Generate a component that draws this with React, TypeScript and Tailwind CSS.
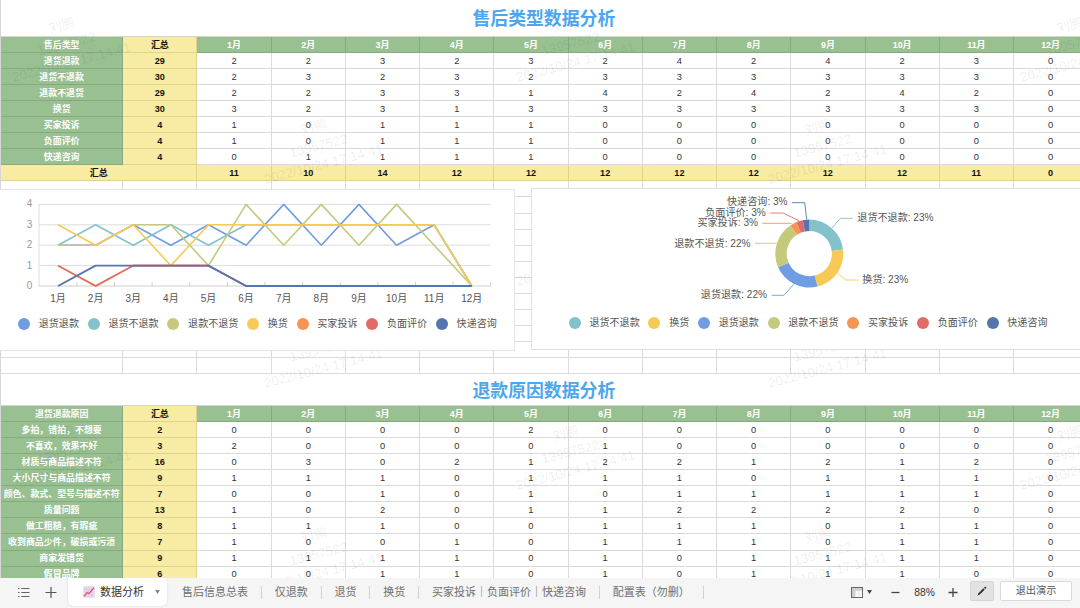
import React from "react";

const MONTHS = ["1月", "2月", "3月", "4月", "5月", "6月", "7月", "8月", "9月", "10月", "11月", "12月"];

const COLORS: Record<string, string> = {
  退货退款: "#709ce4",
  退货不退款: "#83c2ca",
  退款不退货: "#c6c87c",
  换货: "#f7c956",
  买家投诉: "#f69456",
  负面评价: "#e26c65",
  快递咨询: "#5475af",
};

type Row = { name: string; total: number; values: number[] };

const TYPES: Row[] = [
  { name: "退货退款", total: 29, values: [2, 2, 3, 2, 3, 2, 4, 2, 4, 2, 3, 0] },
  { name: "退货不退款", total: 30, values: [2, 3, 2, 3, 2, 3, 3, 3, 3, 3, 3, 0] },
  { name: "退款不退货", total: 29, values: [2, 2, 3, 3, 1, 4, 2, 4, 2, 4, 2, 0] },
  { name: "换货", total: 30, values: [3, 2, 3, 1, 3, 3, 3, 3, 3, 3, 3, 0] },
  { name: "买家投诉", total: 4, values: [1, 0, 1, 1, 1, 0, 0, 0, 0, 0, 0, 0] },
  { name: "负面评价", total: 4, values: [1, 0, 1, 1, 1, 0, 0, 0, 0, 0, 0, 0] },
  { name: "快递咨询", total: 4, values: [0, 1, 1, 1, 1, 0, 0, 0, 0, 0, 0, 0] },
];

const SUMS = [11, 10, 14, 12, 12, 12, 12, 12, 12, 12, 11, 0];

const REASONS: Row[] = [
  { name: "多拍，错拍，不想要", total: 2, values: [0, 0, 0, 0, 2, 0, 0, 0, 0, 0, 0, 0] },
  { name: "不喜欢，效果不好", total: 3, values: [2, 0, 0, 0, 0, 1, 0, 0, 0, 0, 0, 0] },
  { name: "材质与商品描述不符", total: 16, values: [0, 3, 0, 2, 1, 2, 2, 1, 2, 1, 2, 0] },
  { name: "大小尺寸与商品描述不符", total: 9, values: [1, 1, 1, 0, 1, 1, 1, 0, 1, 1, 1, 0] },
  { name: "颜色、款式、型号与描述不符", total: 7, values: [0, 0, 1, 0, 1, 0, 1, 1, 1, 1, 1, 0] },
  { name: "质量问题", total: 13, values: [1, 0, 2, 0, 1, 1, 2, 2, 2, 2, 0, 0] },
  { name: "做工粗糙，有瑕疵", total: 8, values: [1, 1, 1, 0, 0, 1, 1, 1, 0, 1, 1, 0] },
  { name: "收到商品少件，破损或污渍", total: 7, values: [1, 0, 0, 1, 0, 1, 1, 1, 0, 1, 1, 0] },
  { name: "商家发错货", total: 9, values: [1, 1, 1, 1, 0, 1, 0, 1, 1, 1, 1, 0] },
  { name: "假冒品牌", total: 6, values: [0, 0, 1, 1, 0, 1, 0, 1, 1, 1, 0, 0] },
];

const ROW = "grid h-[16.05px] shrink-0 grid-cols-[122.3px_74.1px_repeat(12,74.24px)]";
const CELL = "flex items-center justify-center whitespace-nowrap border-r border-b pt-[1.5px]";
const GREEN = "border-[#86aa80] bg-[#98c091] font-bold text-white";
const YELLOW = "border-[#e0d28f] bg-[#f8eba4] font-bold text-[#141414]";
const PLAIN = "border-[#dadada] bg-white text-[9.3px] text-[#333]";

function HeaderRow({ label }: { label: string }) {
  return (
    <div className={ROW}>
      <div className={`${CELL} ${GREEN}`}>{label}</div>
      <div className={`${CELL} ${YELLOW}`}>汇总</div>
      {MONTHS.map((m) => (
        <div key={m} className={`${CELL} ${GREEN}`}>{m}</div>
      ))}
    </div>
  );
}

function DataRow({ row }: { row: Row }) {
  return (
    <div className={ROW}>
      <div className={`${CELL} ${GREEN}`}>{row.name}</div>
      <div className={`${CELL} ${YELLOW} text-[9.1px]`}>{row.total}</div>
      {row.values.map((v, i) => (
        <div key={i} className={`${CELL} ${PLAIN}`}>{v}</div>
      ))}
    </div>
  );
}

function BlankRow() {
  return (
    <div className={ROW}>
      {Array.from({ length: 14 }, (_, i) => (
        <div key={i} className={`${CELL} ${PLAIN}`} />
      ))}
    </div>
  );
}

function Legend({ names }: { names: string[] }) {
  return (
    <div className="flex gap-[8.7px]">
      {names.map((n) => (
        <div key={n} className="flex items-center gap-[8.75px] whitespace-nowrap text-[10.05px] leading-3 text-[#555]">
          <span className="size-3 rounded-full" style={{ backgroundColor: COLORS[n] }} />
          <span>{n}</span>
        </div>
      ))}
    </div>
  );
}

function LineChart() {
  const x = (i: number) => 58 + i * 37.62;
  const y = (v: number) => 286 - v * 20.4;
  return (
    <svg className="absolute inset-0" width="514" height="160" viewBox="0 190 514 160">
      {[0, 1, 2, 3, 4].map((v) => (
        <g key={v}>
          <line x1="39" x2="490.5" y1={y(v)} y2={y(v)} stroke={v ? "#dcdcdc" : "#cfcfcf"} />
          <text x="32.3" y={y(v) + 3} textAnchor="end" fontSize="10" fill="#999">{v}</text>
        </g>
      ))}
      <line x1="39" x2="39" y1="204" y2="286" stroke="#dedede" />
      {MONTHS.map((m, i) => (
        <g key={m}>
          <line x1={x(i) + 18.9} x2={x(i) + 18.9} y1="282" y2="286" stroke="#cfcfcf" />
          <text x={x(i)} y="302" textAnchor="middle" fontSize="10" fill="#555">{m}</text>
        </g>
      ))}
      {TYPES.map((t, i) => (
        <polyline
          key={t.name}
          points={t.values.map((v, k) => `${x(k)},${y(v)}`).join(" ")}
          fill="none"
          stroke={COLORS[t.name]}
          strokeWidth={i === 6 ? 1.8 : 1.6}
          strokeLinejoin="bevel"
        />
      ))}
    </svg>
  );
}

const SLICES = [
  { name: "退货不退款", value: 30, pct: 23, line: "832,228 840.3,218.3 852.7,218.3", tx: 857.3, ty: 218, end: false },
  { name: "换货", value: 30, pct: 23, line: "837.3,273 845.7,280 858.3,280", tx: 862.3, ty: 280, end: false },
  { name: "退货退款", value: 29, pct: 22, line: "793.7,284.3 784,295.3 771.7,295.3", tx: 767, ty: 295.2, end: true },
  { name: "退款不退货", value: 29, pct: 22, line: "776.7,243.3 755,243.3", tx: 750.5, ty: 243.3, end: true },
  { name: "买家投诉", value: 4, pct: 3, line: "791.7,223.3 762.3,223.3", tx: 758, ty: 222.6, end: true },
  { name: "负面评价", value: 4, pct: 3, line: "799,220.7 783,213 770.3,213", tx: 765.8, ty: 212.5, end: true },
  { name: "快递咨询", value: 4, pct: 3, line: "806.7,219.3 804.7,202.7 792,202.7", tx: 787.6, ty: 202, end: true },
];

function Donut() {
  const cx = 809.3;
  const cy = 253.6;
  const pt = (r: number, f: number) => {
    const a = f * 2 * Math.PI - Math.PI / 2;
    return `${cx + r * Math.cos(a)},${cy + r * Math.sin(a)}`;
  };
  let acc = 0;
  return (
    <svg className="absolute inset-0" width="560" height="160" viewBox="532 189 560 160">
      {SLICES.map((s) => {
        const a = acc / 130;
        acc += s.value;
        const b = acc / 130;
        return (
          <g key={s.name}>
            <path
              d={`M${pt(34, a)} A34,34 0 0 1 ${pt(34, b)} L${pt(22.6, b)} A22.6,22.6 0 0 0 ${pt(22.6, a)} Z`}
              fill={COLORS[s.name]}
            />
            <polyline points={s.line} fill="none" stroke={COLORS[s.name]} strokeWidth="0.9" />
            <text x={s.tx} y={s.ty + 3.2} textAnchor={s.end ? "end" : "start"} fontSize="10.1" fill="#555">
              {`${s.name}: ${s.pct}%`}
            </text>
          </g>
        );
      })}
    </svg>
  );
}

function Watermarks() {
  const marks: { x: number; y: number; strong: boolean }[] = [];
  for (let r = 0; r < 6; r++) {
    for (let c = 0; c < 5; c++) marks.push({ x: 13 + c * 252, y: 82 + r * 102, strong: (r + c) % 2 === 0 });
  }
  return (
    <svg className="pointer-events-none absolute inset-0" width="1080" height="578" viewBox="0 0 1080 578">
      {marks.map((m, i) => (
        <g
          key={i}
          transform={`translate(${m.x},${m.y}) rotate(-14.6)`}
          fontSize="13.3"
          fill="#000"
          fillOpacity={m.strong ? 0.08 : 0.025}
          textAnchor="middle"
        >
          <text x="61.5" y="0">2022/10/24 17:14:41</text>
          <text x="61.5" y="-19">13957522</text>
          <text x="61.5" y="-38">刘鹏</text>
        </g>
      ))}
    </svg>
  );
}

function Sheet() {
  return (
    <main className="relative h-[578px] w-[1080px] overflow-hidden bg-white text-[8.93px] leading-none">
      <div className="flex w-[1089px] flex-col border-l border-[#d6d6d6]">
        <h2 className="flex h-[37px] shrink-0 items-center border-b border-[#cfd6cd] pl-[471.5px] pt-[4px] text-[17.85px] font-bold text-[#4ca7ef]">
          售后类型数据分析
        </h2>
        <HeaderRow label="售后类型" />
        {TYPES.map((t) => (
          <DataRow key={t.name} row={t} />
        ))}
        <div className={ROW}>
          <div className={`${CELL} ${YELLOW} col-span-2`}>汇总</div>
          {SUMS.map((v, i) => (
            <div key={i} className={`${CELL} ${YELLOW} text-[9.1px]`}>{v}</div>
          ))}
        </div>
        {Array.from({ length: 12 }, (_, i) => (
          <BlankRow key={i} />
        ))}
        <h2 className="flex h-[32.1px] shrink-0 items-center border-b border-[#cfd6cd] pl-[471.5px] pt-[4px] text-[17.85px] font-bold text-[#4ca7ef]">
          退款原因数据分析
        </h2>
        <HeaderRow label="退货退款原因" />
        {REASONS.map((r) => (
          <DataRow key={r.name} row={r} />
        ))}
      </div>

      <Watermarks />

      <section className="absolute -left-px top-[189px] h-[162px] w-[516px] border border-[#e4e4e4] bg-white">
        <div className="relative h-full pl-[18px] pt-[128px]">
          <LineChart />
          <Legend names={TYPES.map((t) => t.name)} />
        </div>
      </section>
      <section className="absolute left-[531px] top-[188px] h-[162px] w-[562px] border border-[#e0e0e0] bg-white">
        <div className="relative h-full pl-[36.7px] pt-[128px]">
          <Donut />
          <Legend names={SLICES.map((s) => s.name)} />
        </div>
      </section>
    </main>
  );
}

const TABS = ["售后信息总表", "仅退款", "退货", "换货", "买家投诉｜负面评价｜快递咨询", "配置表（勿删）"];

function Footer() {
  return (
    <footer className="flex h-[30px] w-[1080px] items-start bg-[#f5f5f5] text-[11px] text-[#707070]">
      <button className="ml-[18px] mt-2 h-[13px] w-3">
        <svg width="12" height="13" viewBox="0 0 12 13" stroke="#666" strokeWidth="1">
          <path d="M3.3 2.5H11.5M3.3 6.5H11.5M3.3 10.5H11.5" />
          <path d="M0 2.5H1.5M0 6.5H1.5M0 10.5H1.5" />
        </svg>
      </button>
      <button className="ml-[15px] mt-2 h-[13px] w-3">
        <svg width="12" height="13" viewBox="0 0 12 13" stroke="#555" strokeWidth="1.2">
          <path d="M0.5 6.5H11.5M6 1V12" />
        </svg>
      </button>
      <div className="ml-[11px] flex h-[27.5px] w-[99px] items-center rounded-b-[5px] bg-white pl-[15px] shadow-[0_0_2px_rgba(0,0,0,0.16)]">
        <svg width="12" height="12" viewBox="0 0 12 12" fill="none">
          <rect x="0.3" y="0.3" width="11.4" height="11.4" rx="1.2" fill="#e5dbea" />
          <path d="M3.2 .5V11.5M6 .5V11.5M8.8 .5V11.5M.5 3.2H11.5M.5 6H11.5M.5 8.8H11.5" stroke="#cdbfd8" strokeWidth="0.5" />
          <path d="M0.9 10.3L4.1 6.7L6.2 7.3L11 1.6" stroke="#ee4266" strokeWidth="1.2" />
        </svg>
        <span className="ml-[5px] whitespace-nowrap pt-px text-[#333]">数据分析</span>
        <svg className="ml-[10.5px]" width="5" height="4" viewBox="0 0 5 4" fill="#888">
          <path d="M0 0H5L2.5 4Z" />
        </svg>
      </div>
      <nav className="ml-0.5 mt-2 flex h-[13px] items-center">
        {TABS.map((t) => (
          <span key={t} className="flex h-[13px] items-center whitespace-nowrap border-r border-[#d2d2d2] px-[12.9px] leading-[13px]">
            {t}
          </span>
        ))}
      </nav>
      <div className="ml-auto flex items-start pr-2">
        <svg className="mt-[9px]" width="12" height="11" viewBox="0 0 12 11" fill="none">
          <rect x="0.5" y="0.5" width="11" height="10" fill="#fff" stroke="#666" />
          <path d="M1 1H11V3.6H4V10H1Z" fill="#cfcfcf" />
          <path d="M4.2 1V10M1 3.8H11M7.8 1V10M1 7H11" stroke="#ccc" strokeWidth="0.5" />
        </svg>
        <svg className="ml-[4.5px] mt-3" width="5" height="4" viewBox="0 0 5 4" fill="#444">
          <path d="M0 0H5L2.5 4Z" />
        </svg>
        <svg className="ml-[19px] mt-2" width="9" height="13" viewBox="0 0 9 13" stroke="#444" strokeWidth="1.3">
          <path d="M0.5 6.5H8.5" />
        </svg>
        <span className="ml-[14.2px] mt-2 text-[10.3px] leading-[13px] text-[#333]">88%</span>
        <svg className="ml-[13.1px] mt-2" width="10" height="13" viewBox="0 0 10 13" stroke="#444" strokeWidth="1.3">
          <path d="M0.5 6.5H9.5M5 2V11" />
        </svg>
        <button className="ml-[12px] mt-[3px] flex h-5 w-6 items-center justify-center rounded-[2px] border border-[#d5d5d5] bg-[#e2e2e2]">
          <svg width="10" height="10" viewBox="0 0 10 10" stroke="#333" strokeWidth="1.9">
            <path d="M1.6 8.4L7 3M7.6 2.4L8.9 1.1" />
            <path d="M0.6 9.4L2.2 7.8" strokeWidth="1" />
          </svg>
        </button>
        <button className="ml-[6px] mt-[3px] flex h-5 w-[72px] items-center justify-center rounded-[2px] border border-[#d9d9d9] bg-white pt-px text-[10.2px] leading-none text-[#555]">
          退出演示
        </button>
      </div>
    </footer>
  );
}

export default function App() {
  return (
    <div className="h-[608px] w-[1080px] overflow-hidden font-['Liberation_Sans','Noto_Sans_CJK_SC',sans-serif]">
      <Sheet />
      <Footer />
    </div>
  );
}
